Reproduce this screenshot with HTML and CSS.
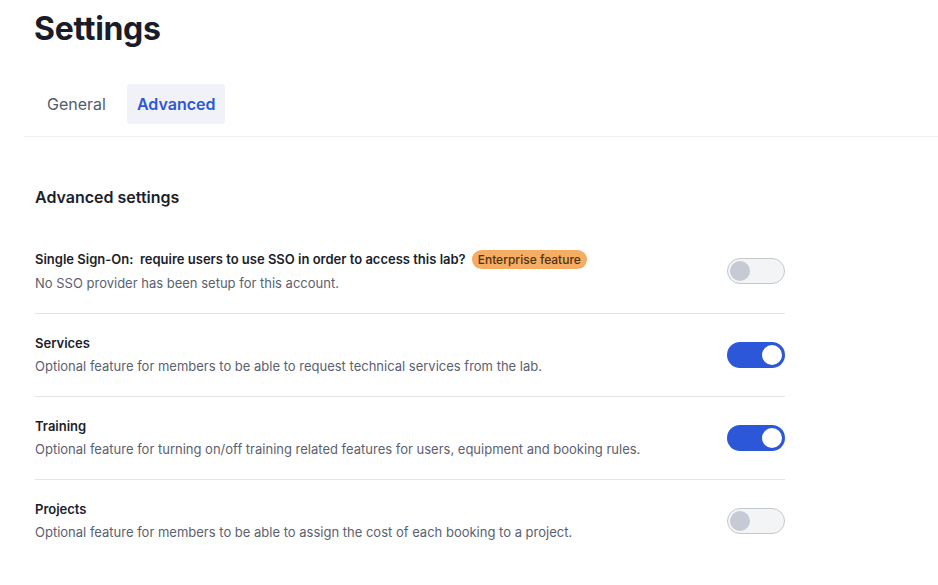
FILE: index.html
```html
<!DOCTYPE html>
<html>
<head>
<meta charset="utf-8">
<link rel="stylesheet" href="styles.css">
</head>
<body>
<div class="page">
  <h1 class="title">Settings</h1>
  <nav class="tabs">
    <div class="tab">General</div>
    <div class="tab active">Advanced</div>
  </nav>
  <section class="content">
    <h2 class="heading">Advanced settings</h2>
    <div class="row">
      <div class="info">
        <div class="row-title">Single Sign-On:&nbsp; require users to use SSO in order to access this lab?<span class="badge">Enterprise feature</span></div>
        <div class="row-desc">No SSO provider has been setup for this account.</div>
      </div>
      <div class="toggle off"><span class="knob"></span></div>
    </div>
    <div class="row">
      <div class="info">
        <div class="row-title">Services</div>
        <div class="row-desc">Optional feature for members to be able to request technical services from the lab.</div>
      </div>
      <div class="toggle on"><span class="knob"></span></div>
    </div>
    <div class="row">
      <div class="info">
        <div class="row-title">Training</div>
        <div class="row-desc">Optional feature for turning on/off training related features for users, equipment and booking rules.</div>
      </div>
      <div class="toggle on"><span class="knob"></span></div>
    </div>
    <div class="row">
      <div class="info">
        <div class="row-title">Projects</div>
        <div class="row-desc">Optional feature for members to be able to assign the cost of each booking to a project.</div>
      </div>
      <div class="toggle off"><span class="knob"></span></div>
    </div>
  </section>
</div>
</body>
</html>
```
FILE: styles.css
```css
* { box-sizing: border-box; }
html, body { margin: 0; padding: 0; background: #fff; }
body { font-family: Inter, "Noto Sans", sans-serif; color: #1b1e2b; }
.page { padding-left: 24px; }
.title {
  margin: 0;
  padding: 10px 0 0 10px;
  font-size: 32px;
  line-height: 38px;
  font-weight: 700;
  letter-spacing: -0.3px;
  color: #1a1d29;
}
.tabs {
  display: flex;
  gap: 11px;
  padding: 36px 0 12px 13px;
  border-bottom: 1px solid #f0f1f4;
}
.tab {
  height: 40px;
  padding: 0 10px;
  display: flex;
  align-items: center;
  font-size: 16px;
  color: #555b6b;
  border-radius: 3px;
}
.tab.active {
  background: #f1f2f8;
  color: #2c57d8;
  font-weight: 600;
}
.content {
  padding: 49px 0 0 11px;
  width: 761px;
}
.heading {
  margin: 0 0 21px 0;
  font-size: 16px;
  line-height: 22px;
  font-weight: 600;
  color: #1b1e2b;
}
.row {
  display: flex;
  align-items: center;
  justify-content: space-between;
  padding: 21px 0;
  border-bottom: 1px solid #e2e4e9;
}
.row:last-child { border-bottom: none; }
.info { display: flex; flex-direction: column; gap: 5px; }
.row-title {
  font-size: 13px;
  line-height: 17px;
  font-weight: 600;
  color: #1b1e2b;
  display: flex;
  align-items: center;
  white-space: pre;
}
.badge {
  margin-left: 6px;
  background: #f4ad62;
  color: #55300f;
  font-size: 12px;
  font-weight: 500;
  line-height: 19px;
  padding: 0 6px;
  border-radius: 10px;
}
.row-desc {
  font-size: 13px;
  line-height: 18px;
  color: #5b6170;
}
.toggle {
  width: 58px;
  height: 26px;
  border-radius: 13px;
  display: flex;
  align-items: center;
  padding: 0 2px;
  flex-shrink: 0;
}
.toggle.off { background: #f3f4f6; border: 1px solid #c3c7ce; }
.toggle.on { background: #2c57d8; justify-content: flex-end; padding: 0 3px; }
.knob { width: 20px; height: 20px; border-radius: 50%; }
.toggle.off .knob { background: #c6cad4; }
.toggle.on .knob { background: #fff; }
```
